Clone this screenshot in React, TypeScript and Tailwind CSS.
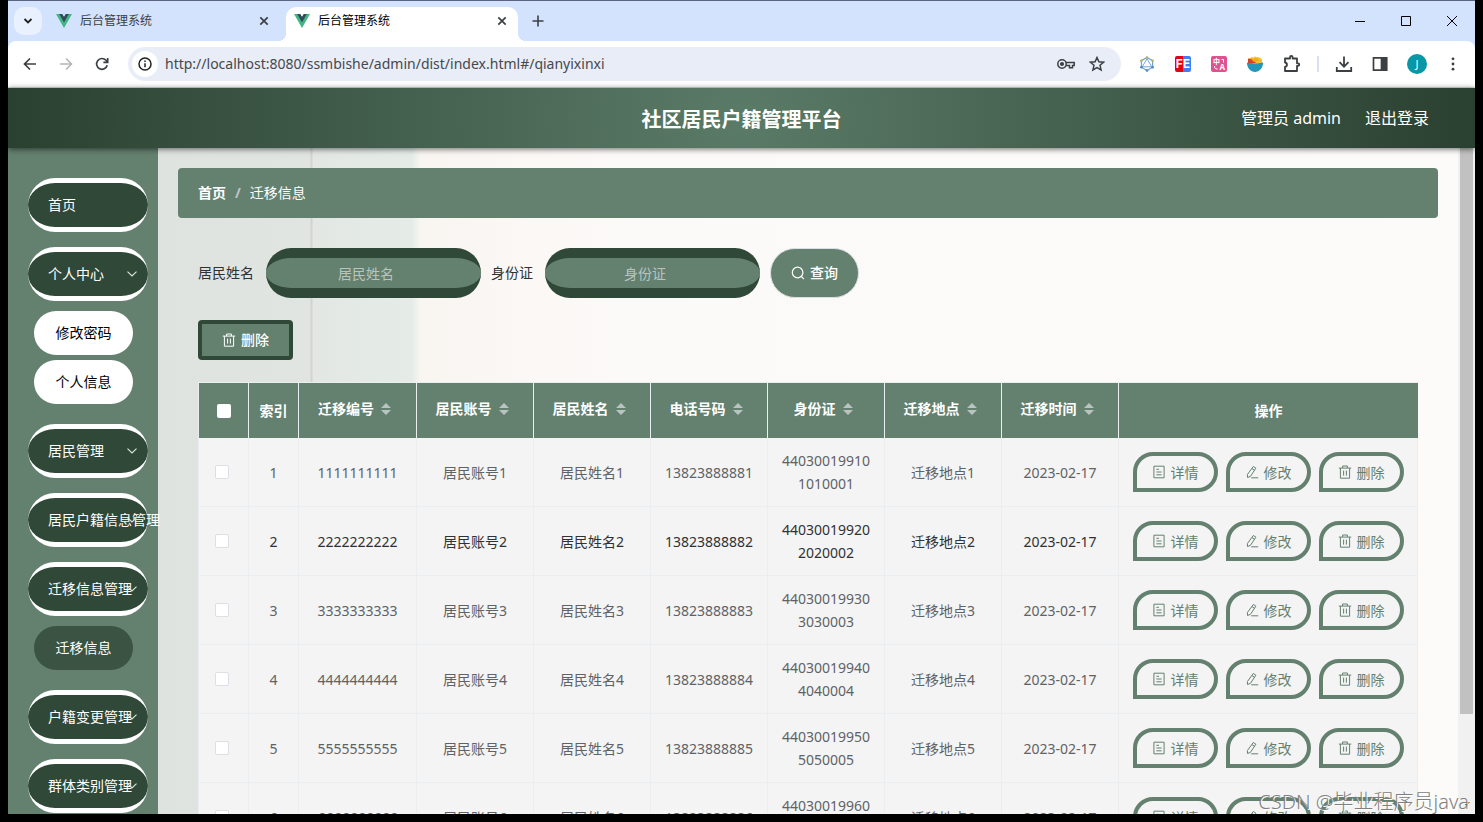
import type { ReactNode } from "react"

interface MenuItem {
  label: string
  arrow?: boolean
  children?: { label: string; active?: boolean }[]
}

const menu: MenuItem[] = [
  { label: "首页" },
  { label: "个人中心", arrow: true, children: [{ label: "修改密码" }, { label: "个人信息" }] },
  { label: "居民管理", arrow: true },
  { label: "居民户籍信息管理", arrow: true },
  { label: "迁移信息管理", arrow: true, children: [{ label: "迁移信息", active: true }] },
  { label: "户籍变更管理", arrow: true },
  { label: "群体类别管理", arrow: true },
]

const columns = ["迁移编号", "居民账号", "居民姓名", "电话号码", "身份证", "迁移地点", "迁移时间"]

const rows = [1, 2, 3, 4, 5, 6].map((n) => ({
  index: n,
  code: String(n).repeat(10),
  account: `居民账号${n}`,
  name: `居民姓名${n}`,
  phone: `1382388888${n}`,
  idCard: `440300199${n}0${n}0${n}000${n}`,
  place: `迁移地点${n}`,
  date: "2023-02-17",
}))

function VueLogo() {
  return (
    <svg width="16" height="14" viewBox="0 0 16 14" className="shrink-0">
      <path d="M0 0h6.2L8 3l1.8-3H16L8 14z" fill="#41b883" />
      <path d="M3.2 0h3L8 3l1.8-3h3L8 8.4z" fill="#35495e" />
    </svg>
  )
}

function CloseIcon() {
  return (
    <svg width="10" height="10" viewBox="0 0 10 10" fill="none" stroke="#3c3f43" strokeWidth="1.7">
      <path d="M1.3 1.3l7.4 7.4M8.7 1.3l-7.4 7.4" />
    </svg>
  )
}

function TrashIcon() {
  return (
    <svg width="14" height="14" viewBox="0 0 14 14" fill="none" stroke="currentColor" className="shrink-0">
      <path d="M.8 3.1h12.4M4.6 3V1h4.8v2M2.4 3.2v10h9.2v-10M5.6 5.6v5M8.4 5.6v5" />
    </svg>
  )
}

function DocIcon() {
  return (
    <svg width="14" height="14" viewBox="0 0 14 14" fill="none" stroke="currentColor" className="shrink-0">
      <path d="M1.9 1.2h10.2v11.6H1.9zM4.4 4.3h2.6M4.4 7h5.2M4.4 9.8h5.2" />
    </svg>
  )
}

function EditIcon() {
  return (
    <svg width="14" height="14" viewBox="0 0 14 14" fill="none" stroke="currentColor" className="shrink-0">
      <path d="M8.3 1.5l2.6 1.7-5.5 8.2-2.9 1.1-.1-3zM7 3.6l2.5 1.7M6.2 12.8h7" />
    </svg>
  )
}

function SearchIcon() {
  return (
    <svg width="14" height="14" viewBox="0 0 14 14" fill="none" stroke="currentColor" strokeWidth="1.2" className="shrink-0">
      <circle cx="6.6" cy="6.5" r="5.3" />
      <path d="M10.3 10.3l2.6 2.8" />
    </svg>
  )
}

function SortCaret() {
  return (
    <svg width="10" height="12" viewBox="0 0 10 12" fill="#b9c4c0" className="shrink-0">
      <path d="M5 0l5 5H0zM5 12l5-5H0z" />
    </svg>
  )
}

function Tab({ active }: { active?: boolean }) {
  return (
    <div
      className={
        active
          ? "relative flex h-[34px] w-[232px] items-center self-end rounded-t-[10px] bg-white pr-2.5 pb-1.5 pl-2 text-black"
          : "flex h-[34px] w-[230px] items-center self-end pr-2 pb-1.5 pl-2 text-[#3c4043]"
      }
    >
      <VueLogo />
      <span className="ml-2 flex-1 text-xs">后台管理系统</span>
      <button aria-label="关闭标签页" className="p-px">
        <CloseIcon />
      </button>
      {active && (
        <>
          <span className="absolute bottom-0 -left-2 size-2 bg-[radial-gradient(circle_at_0_0,transparent_8px,white_8px)]" />
          <span className="absolute -right-2 bottom-0 size-2 bg-[radial-gradient(circle_at_100%_0,transparent_8px,white_8px)]" />
        </>
      )}
    </div>
  )
}

function TabStrip() {
  return (
    <div className="flex h-10 items-center bg-[#d3e2fd] pl-1.5">
      <button aria-label="搜索标签页" className="mr-1.5 flex size-7 items-center justify-center rounded-[10px] bg-[#e9f1fe]">
        <svg width="10" height="6" viewBox="0 0 10 6" fill="none" stroke="#222" strokeWidth="1.8">
          <path d="M1.5 1L5 4.500 8.500 1" />
        </svg>
      </button>
      <Tab />
      <div className="w-2" />
      <Tab active />
      <button aria-label="新标签页" className="ml-3.5">
        <svg width="12" height="12" viewBox="0 0 12 12" stroke="#3c4043" strokeWidth="1.6">
          <path d="M6 .5v11M.5 6h11" />
        </svg>
      </button>
      <div className="ml-auto flex items-center gap-9 pr-[18px]">
        <button aria-label="最小化">
          <svg width="10" height="10" viewBox="0 0 10 10" stroke="#000">
            <path d="M0 5.500h10" />
          </svg>
        </button>
        <button aria-label="最大化">
          <svg width="10" height="10" viewBox="0 0 10 10" fill="none" stroke="#000">
            <path d="M.5.5h9v9h-9z" />
          </svg>
        </button>
        <button aria-label="关闭">
          <svg width="10" height="10" viewBox="0 0 10 10" stroke="#000">
            <path d="M0 0l10 10M10 0L0 10" />
          </svg>
        </button>
      </div>
    </div>
  )
}

function Toolbar() {
  return (
    <div className="bg-[#d3e2fd]">
      <div className="flex h-[47px] items-center rounded-t-lg border-b border-[#dcdfe3] bg-white pr-3.5 pl-3.5">
        <button aria-label="后退">
          <svg width="16" height="16" viewBox="0 0 16 16" fill="none" stroke="#3c4043" strokeWidth="1.7">
            <path d="M14 8H3M8 2.500L2.500 8 8 13.500" />
          </svg>
        </button>
        <button aria-label="前进" className="ml-5">
          <svg width="16" height="16" viewBox="0 0 16 16" fill="none" stroke="#b4b6b9" strokeWidth="1.6">
            <path d="M2 8h11M8 2.500L13.500 8 8 13.500" />
          </svg>
        </button>
        <button aria-label="重新加载" className="ml-5">
          <svg width="16" height="16" viewBox="0 0 16 16" fill="none" stroke="#3c4043" strokeWidth="1.7">
            <path d="M13.200 9.300A5.400 5.400 0 1 1 12 4.300L13.500 6M13.700 2v4.300H9.400" />
          </svg>
        </button>
        <div className="ml-[18px] flex h-[34px] flex-1 items-center rounded-full bg-[#e9edf7] pr-4 pl-1">
          <span className="flex size-[26px] items-center justify-center rounded-full bg-white">
            <svg width="14" height="14" viewBox="0 0 14 14" fill="none" stroke="#222" strokeWidth="1.5">
              <circle cx="7" cy="7" r="6" />
              <path d="M7 6.200v4M7 3.500v1.500" />
            </svg>
          </span>
          <input
            aria-label="地址"
            defaultValue="http://localhost:8080/ssmbishe/admin/dist/index.html#/qianyixinxi"
            className="ml-[7px] min-w-0 flex-1 bg-transparent text-sm text-[#45484d] outline-none"
          />
          <svg width="18" height="12" viewBox="0 0 18 12" fill="none" stroke="#3c4043" strokeWidth="1.5">
            <circle cx="5" cy="6" r="4.200" />
            <path d="M9 4.500h8.200v3h-1.700v2.300h-3V7.500H9" />
            <circle cx="5" cy="6" r="1.300" fill="#3c4043" />
          </svg>
          <svg width="16" height="16" viewBox="0 0 16 16" fill="none" stroke="#3c4043" strokeWidth="1.500" className="ml-3.5">
            <path d="M8 1.500l1.900 4.300 4.700.4-3.600 3.100 1.100 4.600L8 11.500l-4.100 2.400L5 9.300 1.400 6.200l4.700-.4z" />
          </svg>
        </div>
        <div className="ml-[18px] flex items-center gap-5">
          <svg width="16" height="16" viewBox="0 0 16 16" fill="none">
            <path d="M8 1.500l5.600 3.200v6.500L8 14.500l-5.600-3.300V4.700z" stroke="#7ba0c4" strokeWidth="1.200" />
            <path d="M8 2.800l4.800 8H3.200z" stroke="#6fa3dd" />
            <g fill="#a9b85a">
              <circle cx="8" cy="1.500" r="1.300" />
              <circle cx="13.600" cy="4.700" r="1.300" />
              <circle cx="2.400" cy="4.700" r="1.300" />
            </g>
            <g fill="#4a86c8">
              <circle cx="13.600" cy="11.200" r="1.300" />
              <circle cx="2.400" cy="11.200" r="1.300" />
              <circle cx="8" cy="14.500" r="1.300" />
            </g>
          </svg>
          <span className="flex size-4 items-center justify-center rounded-xs bg-linear-to-r from-[#e60012] from-50% to-[#3b82f0] to-50% font-[Inter] text-xs leading-4 font-bold text-white">
            FE
          </span>
          <span className="relative block size-4 rounded-xs bg-[#e2508f] text-white">
            <span className="absolute top-0.5 left-0.5 text-[7px] leading-[7px] font-bold">中</span>
            <span className="absolute right-0.5 bottom-px text-[8px] leading-[8px] font-bold">A</span>
            <svg width="16" height="16" viewBox="0 0 16 16" fill="none" stroke="white" className="absolute inset-0">
              <path d="M10.500 3.500h2v3M3.500 10c0 2 .5 3 3 3" />
            </svg>
          </span>
          <svg width="16" height="16" viewBox="0 0 16 16">
            <path d="M1 3l4-2 3 1 3-1 4 2v5H1z" fill="#f2c230" />
            <path d="M1 2.500l5 1L9 7 1 8z" fill="#d8402f" />
            <path d="M8 0l1 2 2-1-.5 2.500 2.500.5-3 1.500H6L4.500 3l2 .2z" fill="#f7a823" />
            <path d="M0 6.500c4 1.500 10 1.500 16 0 .3 5-3.500 9.500-8 9.500S-.3 11.500 0 6.500z" fill="#2496b8" />
          </svg>
          <svg width="18" height="18" viewBox="0 0 18 18" fill="none" stroke="#3c4043" strokeWidth="1.800" strokeLinejoin="round">
            <path d="M2 3.500h5V2.200a1 1 0 0 1 2.600 0v1.300H14v4.800h1a1 1 0 0 1 0 2.600h-1V16H2v-4.200c2.600-.3 2.600-4 0-4.300z" />
          </svg>
        </div>
        <span className="mx-4 h-4 w-0.5 bg-[#d5e1f5]" />
        <div className="flex items-center gap-[18px]">
          <svg width="18" height="18" viewBox="0 0 18 18" fill="none" stroke="#3c4043" strokeWidth="1.800">
            <path d="M9 1.500v10M4.500 7.200L9 11.700l4.500-4.500M1.800 12v4h14.400v-4" />
          </svg>
          <svg width="18" height="18" viewBox="0 0 18 18" fill="none" stroke="#3c4043" strokeWidth="1.700">
            <path d="M2.500 2.800h13v12.400h-13z" />
            <path d="M10.500 2.800h5v12.400h-5z" fill="#3c4043" />
          </svg>
          <span className="flex size-5 items-center justify-center rounded-full bg-[#0797a7] text-[11px] text-white">J</span>
          <svg width="16" height="16" viewBox="0 0 16 16" fill="#3c4043">
            <circle cx="8" cy="2.800" r="1.400" />
            <circle cx="8" cy="8" r="1.400" />
            <circle cx="8" cy="13.200" r="1.400" />
          </svg>
        </div>
      </div>
    </div>
  )
}

function Sidebar() {
  return (
    <nav className="relative z-10 w-[150px] shrink-0 bg-[#64806f] px-5 pt-[30px] text-sm text-white">
      {menu.map((item) => (
        <div key={item.label} className="mb-[15px]">
          <a
            href="#"
            className="relative flex h-[54px] w-[120px] items-center rounded-[40px] border-y-[5px] border-white bg-[#304838] pl-5 whitespace-nowrap"
          >
            {item.label}
            {item.arrow && (
              <svg
                width="10"
                height="6"
                viewBox="0 0 10 6"
                fill="none"
                stroke="#dfe6e1"
                strokeWidth="1.100"
                className="absolute top-[19px] right-[11px]"
              >
                <path d="M.5.7L5 5 9.500.7" />
              </svg>
            )}
          </a>
          {item.children && (
            <div className="flex flex-col gap-[5px] pt-2.5 pb-[5px] pl-1.5">
              {item.children.map((child) => (
                <a
                  key={child.label}
                  href="#"
                  className={
                    child.active
                      ? "flex h-11 w-[99px] items-center justify-center rounded-full bg-[#3b5343] text-white"
                      : "flex h-11 w-[99px] items-center justify-center rounded-full bg-white text-black"
                  }
                >
                  {child.label}
                </a>
              ))}
            </div>
          )}
        </div>
      ))}
    </nav>
  )
}

function ActionButton({ icon, children }: { icon: ReactNode; children: ReactNode }) {
  return (
    <button className="flex h-10 w-[85px] items-center justify-center gap-[5px] rounded-[20px] rounded-bl-none border-4 border-[#64806f] text-[#64806f]">
      {icon}
      {children}
    </button>
  )
}

function SearchField({ id, label }: { id: string; label: string }) {
  return (
    <div className="flex items-center gap-3">
      <label htmlFor={id}>{label}</label>
      <input
        id={id}
        placeholder={label}
        className="h-[50px] w-[215px] rounded-[25px] border-y-10 border-[#304838] bg-[#64806f] pr-[30px] pl-[15px] text-center text-white outline-none placeholder:text-[#b9c4c0]"
      />
    </div>
  )
}

function DataTable() {
  const td = "border-r border-b border-[#ebeef0] px-3 py-[11px] leading-[23px] break-all"
  return (
    <table className="mt-[22px] w-full table-fixed border-separate border-spacing-0 border-t border-l border-[#ebeef0] bg-[#f4f4f4] text-center text-sm text-[#606266]">
      <colgroup>
        <col className="w-[50px]" />
        <col className="w-[50px]" />
        {columns.map((c, i) => (
          <col key={c} className={i === 0 ? "w-[118px]" : ""} />
        ))}
        <col className="w-[299px]" />
      </colgroup>
      <thead className="bg-[#64806f] text-white">
        <tr className="h-[55px]">
          <th className="border-r border-[#ebeef0]">
            <input
              type="checkbox"
              aria-label="全选"
              className="mx-auto block size-3.5 appearance-none rounded-xs bg-white"
            />
          </th>
          <th className="border-r border-[#ebeef0]">索引</th>
          {columns.map((c) => (
            <th key={c} className="border-r border-[#ebeef0]">
              <button className="inline-flex items-center gap-[7px] pr-1.5 pb-1 font-bold">
                {c}
                <SortCaret />
              </button>
            </th>
          ))}
          <th>操作</th>
        </tr>
      </thead>
      <tbody>
        {rows.map((row) => (
          <tr key={row.index} className={row.index === 2 ? "text-[#303133]" : ""}>
            <td className={td}>
              <div className="flex justify-center pr-1">
                <input
                  type="checkbox"
                  aria-label={`选择第${row.index}行`}
                  className="size-3.5 appearance-none rounded-xs border border-[#dcdfe6] bg-white"
                />
              </div>
            </td>
            <td className={td}>{row.index}</td>
            <td className={td}>{row.code}</td>
            <td className={td}>{row.account}</td>
            <td className={td}>{row.name}</td>
            <td className={td}>{row.phone}</td>
            <td className={td}>{row.idCard}</td>
            <td className={td}>{row.place}</td>
            <td className={td}>{row.date}</td>
            <td className={td}>
              <div className="flex justify-center gap-2">
                <ActionButton icon={<DocIcon />}>详情</ActionButton>
                <ActionButton icon={<EditIcon />}>修改</ActionButton>
                <ActionButton icon={<TrashIcon />}>删除</ActionButton>
              </div>
            </td>
          </tr>
        ))}
      </tbody>
    </table>
  )
}

export default function App() {
  return (
    <div className="relative flex h-screen flex-col overflow-hidden border-x-8 border-b-8 border-black bg-white font-['Noto_Sans','Noto_Sans_CJK_SC',sans-serif]">
      <div className="h-px shrink-0 bg-[#5b6480]" />
      <TabStrip />
      <Toolbar />
      <header className="relative z-20 flex h-[60px] shrink-0 items-center justify-center bg-[radial-gradient(circle,#5a7b67,#2a4030)] text-white shadow-[0_1px_6px_rgba(0,0,0,0.6)]">
        <h1 className="pt-[3px] text-xl font-bold">社区居民户籍管理平台</h1>
        <div className="absolute right-[46px] flex gap-6">
          <span>管理员 admin</span>
          <a href="#">退出登录</a>
        </div>
      </header>
      <div className="flex min-h-0 flex-1">
        <Sidebar />
        <main className="min-w-0 flex-1 overflow-hidden bg-[linear-gradient(90deg,#dfe3e0_0,#e1e5e2_152px,#d3d3d1_153px,#d3d3d1_154px,#e2e7e4_155px,#e5ece7_254px,#f9f5f1_262px,#fcfaf8_460px,#fcfbfa_100%)] p-5">
          <div className="flex h-[50px] items-center rounded bg-[#64806f] px-5 text-sm text-white">
            <a href="#" className="font-bold">
              首页
            </a>
            <span className="mx-[9px] font-bold text-[#c0c4cc]">/</span>
            <span>迁移信息</span>
          </div>
          <div className="px-5 pt-[30px] text-sm text-[#303133]">
            <form className="flex items-center gap-2.5">
              <SearchField id="name" label="居民姓名" />
              <SearchField id="idCard" label="身份证" />
              <button
                type="button"
                className="flex h-[50px] w-[89px] items-center justify-center gap-[5px] rounded-[25px] border border-[#dcdfe6] bg-[#64806f] font-medium text-white"
              >
                <SearchIcon />
                查询
              </button>
            </form>
            <button className="mt-[22px] flex h-10 w-[95px] items-center justify-center gap-[5px] rounded border-4 border-[#304838] bg-[#64806f] font-medium text-white">
              <TrashIcon />
              删除
            </button>
            <DataTable />
          </div>
        </main>
        <div className="flex w-[17px] shrink-0 flex-col items-center justify-between bg-[#f1f1f1]">
          <div className="h-[85%] w-[13px] bg-[#c1c1c1]" />
          <svg width="7" height="4" viewBox="0 0 7 4" fill="#505050" className="mb-2">
            <path d="M0 0h7L3.500 4z" />
          </svg>
        </div>
      </div>
      <div className="absolute right-1.5 bottom-0 z-30 text-xl leading-6 font-light text-[#808080] [text-shadow:1px_1px_0_#ffffff]">
        CSDN @毕业程序员java
      </div>
    </div>
  )
}
